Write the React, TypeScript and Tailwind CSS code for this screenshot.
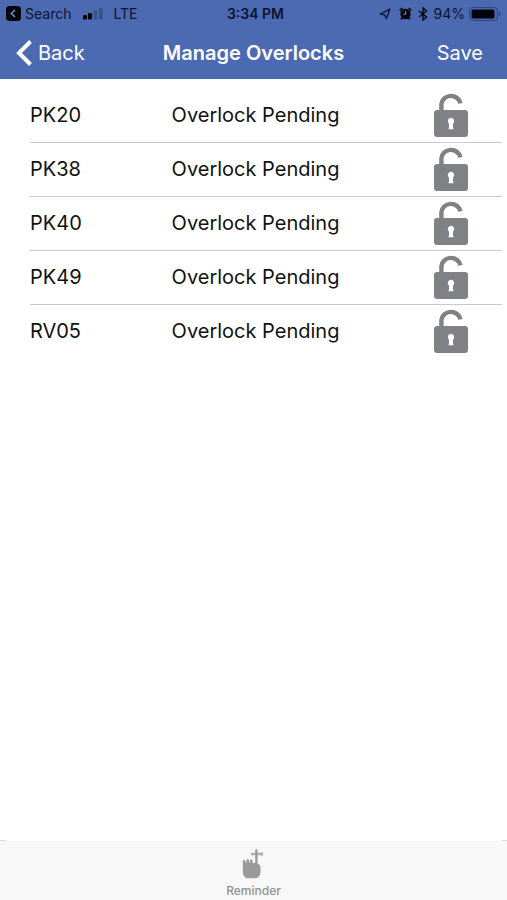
import React from 'react';

interface Overlock {
  unit: string;
  status: string;
}

const overlocks: Overlock[] = [
  { unit: 'PK20', status: 'Overlock Pending' },
  { unit: 'PK38', status: 'Overlock Pending' },
  { unit: 'PK40', status: 'Overlock Pending' },
  { unit: 'PK49', status: 'Overlock Pending' },
  { unit: 'RV05', status: 'Overlock Pending' },
];

function OpenLockIcon() {
  return (
    <svg width="34" height="44" viewBox="0 0 34 44" fill="none" aria-hidden="true">
      <path d="M7.4 19V11.3A9.6 9.2 0 0 1 26.400 10.400" stroke="#808184" strokeWidth="4.4" />
      <rect y="17" width="34" height="27" rx="3" fill="#808184" />
      <path d="M17 24.800a3.200 3.200 0 0 1 2.300 5.400L19 31v3.500l.6 1.700h-5.200l.6-1.700V31l-.3-.8A3.200 3.200 0 0 1 17 24.800Z" fill="#fff" />
    </svg>
  );
}

function ReminderIcon() {
  return (
    <svg width="22" height="30" viewBox="0 0 22 30" aria-hidden="true">
      {/* Ribbon tied on the raised finger */}
      <path d="M9 3.4 13.500 3.900h2L21 3.200v3.600l-5.500-.8h-2L9 6.600Z" fill="#b0b0b0" />
      <path
        d="M13.2 1.500c0-1.700 2.400-1.700 2.400 0v13c1.800.8 2.900 2 2.900 4V23c0 3-1.200 4-2.800 5.500-.6.500-1.500.8-2.500.8H6c-1.400 0-2.500-.4-3.400-1.500C1.200 26 .8 24.500.8 22V12.300c0-1.800 2.600-1.800 2.600 0v.9c.3.500.8.500 1 0v-1.700c0-1.800 2.600-1.800 2.600 0v1.700c.3.500.8.500 1 0v-1.400c0-1.800 2.500-1.800 2.500 0v2c.4.600 2.300.6 2.700 0Z"
        fill="#9a9a9a"
      />
    </svg>
  );
}

function StatusBar() {
  return (
    <div className="grid h-[27px] grid-cols-[1fr_auto_1fr] items-center px-1.5 text-[14px] leading-none text-[#0b1430]">
      <div className="flex items-center">
        <button className="flex items-center gap-1">
          <svg width="15" height="15" viewBox="0 0 15 15" fill="none" aria-hidden="true">
            <rect width="15" height="15" rx="3.5" fill="#05070d" />
            <path d="M9 4 5.3 7.5 9 11" stroke="#8797c8" strokeWidth="1.3" />
          </svg>
          <span>Search</span>
        </button>
        <svg className="ml-3" width="20" height="12" viewBox="0 0 20 12" aria-label="Signal">
          <rect y="7" width="4" height="4.5" rx="1" fill="#05070d" />
          <rect x="5" y="5" width="4" height="6.5" rx="1" fill="#05070d" />
          <rect x="10.5" y="2.5" width="3.5" height="9" rx="1" fill="#3c5188" />
          <rect x="16" y="0" width="3.5" height="11.5" rx="1" fill="#3c5188" />
        </svg>
        <span className="ml-2.5">LTE</span>
      </div>
      <span className="pl-1 font-semibold">3:34 PM</span>
      <div className="flex items-center justify-end">
        <svg width="12" height="12" viewBox="0 0 12 12" fill="none" aria-hidden="true">
          <path d="M10.8 1.2 1.2 6.2 5.600 6.800 7.400 10.800Z" stroke="#0b1430" strokeWidth="1.3" strokeLinejoin="round" />
        </svg>
        <svg className="ml-2" width="13" height="13" viewBox="0 0 13 13" fill="none" aria-hidden="true">
          <circle cx="6.5" cy="7" r="5.2" fill="#05070d" />
          <path d="M.8 3.5 3.4 1.2M12.2 3.5 9.6 1.2M3.3 10.8 2 12.4M9.7 10.8 11 12.4" stroke="#05070d" strokeWidth="1.8" />
          <path d="M6.7 4.2v3H4.4" stroke="#7f91c6" strokeWidth="1" />
        </svg>
        <svg className="ml-1.5" width="10" height="14" viewBox="0 0 10 14" fill="none" aria-hidden="true">
          <path d="m1 4 7.5 6L5 13V1l3.500 3L1 10" stroke="#05070d" strokeWidth="1.4" />
        </svg>
        <span className="ml-1.5">94%</span>
        <svg className="ml-1" width="32" height="14" viewBox="0 0 32 14" fill="none" aria-label="Battery">
          <rect x=".6" y=".6" width="27.8" height="12.8" rx="3" stroke="#30437a" strokeWidth="1" />
          <rect x="2.5" y="2.5" width="23" height="9" rx="1.5" fill="#02040a" />
          <path d="M30 4.6c2 .8 2 4 0 4.8Z" fill="#30437a" />
        </svg>
      </div>
    </div>
  );
}

export default function App() {
  return (
    <div className="flex min-h-screen flex-col bg-white font-['Inter','Liberation_Sans',sans-serif]">
      <header className="bg-[#4c6ab2]">
        <StatusBar />
        <div className="grid h-[52px] grid-cols-[1fr_auto_1fr] items-center px-4 text-[20px] leading-6 text-white">
          <button className="flex items-center gap-1.5 justify-self-start">
            <svg width="16" height="26" viewBox="0 0 16 26" fill="none" aria-hidden="true">
              <path d="M14.5 1.5 3 13l11.5 11.5" stroke="#fff" strokeWidth="4" />
            </svg>
            <span>Back</span>
          </button>
          <h1 className="font-semibold">Manage Overlocks</h1>
          <button className="justify-self-end pr-2">Save</button>
        </div>
      </header>

      <main className="flex-1 pl-[30px] pr-[5px] pt-[9px]">
        <table className="w-full table-fixed border-collapse text-left text-[20px] leading-6 text-[#111]">
          <tbody>
            {overlocks.map((item) => (
              <tr key={item.unit} className="h-[54px] border-b border-[#c8cacc] last:border-b-0">
                <th scope="row" className="w-[30%] p-0 font-normal">{item.unit}</th>
                <td className="p-0">{item.status}</td>
                <td className="w-[68px] p-0">
                  <button className="block" aria-label={`Overlock ${item.unit}`}>
                    <OpenLockIcon />
                  </button>
                </td>
              </tr>
            ))}
          </tbody>
        </table>
      </main>

      <div className="flex h-px justify-between">
        <span className="w-1.5 bg-[#dcdcdc]" />
        <span className="w-[5px] bg-[#dcdcdc]" />
      </div>
      <nav className="flex h-[59px] justify-center bg-[#f8f8f8] pt-2">
        <button className="flex flex-col items-center gap-1 text-[12px] font-medium leading-4 text-[#929292]">
          <ReminderIcon />
          <span>Reminder</span>
        </button>
      </nav>
    </div>
  );
}
